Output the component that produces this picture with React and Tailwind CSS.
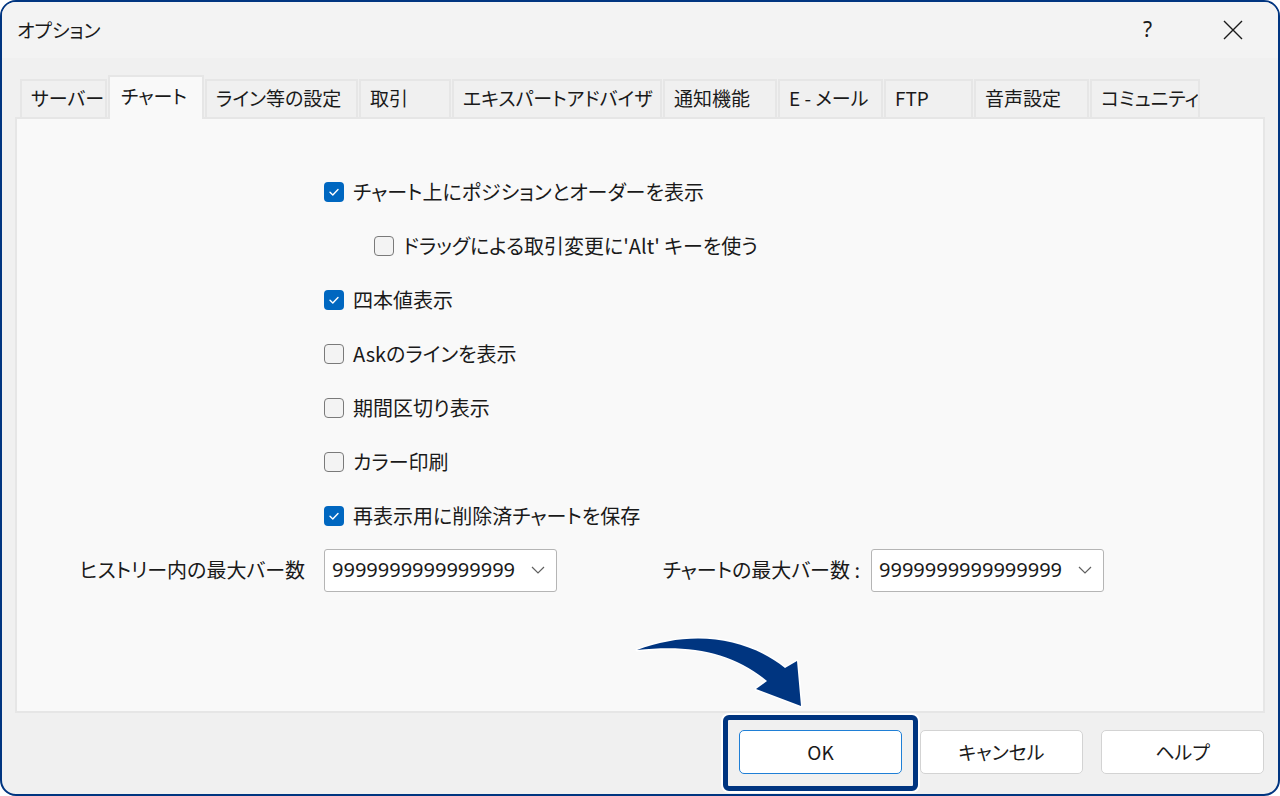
import React from "react";

const tabs = [
  { label: "サーバー", w: "w-[87px]" },
  { label: "チャート", w: "w-[96px]", active: true },
  { label: "ライン等の設定", w: "w-[153px]" },
  { label: "取引", w: "w-[92px]" },
  { label: "エキスパートアドバイザ", w: "w-[210px]" },
  { label: "通知機能", w: "w-[114px]" },
  { label: "E - メール", w: "w-[105px]" },
  { label: "FTP", w: "w-[89px]" },
  { label: "音声設定", w: "w-[115px]" },
  { label: "コミュニティ", w: "w-[110px]" },
];

const options = [
  { label: "チャート上にポジションとオーダーを表示", checked: true },
  { label: "ドラッグによる取引変更に'Alt' キーを使う", checked: false, indent: true },
  { label: "四本値表示", checked: true },
  { label: "Askのラインを表示", checked: false },
  { label: "期間区切り表示", checked: false },
  { label: "カラー印刷", checked: false },
  { label: "再表示用に削除済チャートを保存", checked: true },
];

const Checkbox = ({ checked }) =>
  checked ? (
    <span className="w-[20px] h-[20px] rounded-[4px] bg-[#0067c0] flex items-center justify-center shrink-0">
      <svg width="12" height="10" viewBox="0 0 12 10">
        <path d="M2 5.2 L4.8 8 L10 2.4" fill="none" stroke="#fff" strokeWidth="1.4" strokeLinecap="round" strokeLinejoin="round" />
      </svg>
    </span>
  ) : (
    <span className="w-[20px] h-[20px] rounded-[4px] border-[1.5px] border-[#7a7a7a] bg-[#f3f3f3] shrink-0" />
  );

const Select = ({ value }) => (
  <div className="w-[233px] h-[43px] bg-white border border-[#b5b5b5] rounded-[3px] flex items-center justify-between pl-[7px] pr-[10px]">
    <span className="font-['Noto_Sans',sans-serif] text-[20px] text-[#1a1a1a]">{value}</span>
    <svg width="16" height="10" viewBox="0 0 16 10">
      <path d="M2 2 L8 8 L14 2" fill="none" stroke="#606060" strokeWidth="1.2" />
    </svg>
  </div>
);

const Button = ({ label, primary }) => (
  <div
    className={
      "w-[163px] h-[44px] rounded-[5px] bg-white flex items-center justify-center text-[19px] text-[#1a1a1a] " +
      (primary ? "border-[1.5px] border-[#1f7fd6]" : "border border-[#d3d3d3]")
    }
  >
    {label}
  </div>
);

export default function App() {
  return (
    <div className="relative w-[1280px] h-[796px] bg-white font-['Noto_Sans_CJK_JP',sans-serif] [font-feature-settings:'palt'] text-[#1a1a1a]">
      <div className="w-full h-full border-2 border-[#003580] rounded-[16px] overflow-hidden bg-[#f0f0f0] flex flex-col">
        {/* title bar */}
        <div className="h-[56px] bg-[#f3f3f3] flex items-center justify-between pl-[15px] pr-[35px] shrink-0">
          <span className="text-[19px]">オプション</span>
          <div className="flex items-center gap-[71px]">
            <span className="font-['Noto_Sans',sans-serif] text-[21px]">?</span>
            <svg width="20" height="20" viewBox="0 0 20 20">
              <path d="M1 1 L19 19 M19 1 L1 19" stroke="#1a1a1a" strokeWidth="1.4" />
            </svg>
          </div>
        </div>

        {/* tabs */}
        <div className="px-[13px] pt-[17px]">
          <div className="flex items-end gap-[1px] pl-[5px] h-[42px] relative z-10">
            {tabs.map((t) =>
              t.active ? (
                <div
                  key={t.label}
                  className={t.w + " h-[44px] -mb-[2px] bg-[#f9f9f9] border-2 border-b-0 border-[#e6e6e6] pl-[11px] pt-[4px] text-[19px] leading-[30px] whitespace-nowrap"}
                >
                  {t.label}
                </div>
              ) : (
                <div
                  key={t.label}
                  className={t.w + " h-[38px] bg-[#f0f0f0] border-2 border-b-0 border-[#e6e6e6] pl-[9px] text-[19px] leading-[34px] whitespace-nowrap overflow-hidden"}
                >
                  {t.label}
                </div>
              )
            )}
          </div>

          {/* panel */}
          <div className="h-[596px] bg-[#f9f9f9] border-2 border-[#e6e6e6] pt-[46px]">
            <div className="pl-[307px]">
              {options.map((o) => (
                <div key={o.label} className={"h-[54px] flex items-center gap-[9px] " + (o.indent ? "pl-[50px]" : "")}>
                  <Checkbox checked={o.checked} />
                  <span className="text-[20px]">{o.label}</span>
                </div>
              ))}
            </div>
            <div className="h-[54px] flex items-center">
              <div className="w-[288px] flex justify-end text-[20px]">ヒストリー内の最大バー数</div>
              <div className="ml-[19px]">
                <Select value="9999999999999999" />
              </div>
              <div className="w-[303px] flex justify-end text-[20px]">チャートの最大バー数 :</div>
              <div className="ml-[11px]">
                <Select value="9999999999999999" />
              </div>
            </div>
          </div>
        </div>

        {/* buttons */}
        <div className="flex justify-end gap-[18px] pr-[14px] pt-[17px]">
          <Button label="OK" primary />
          <Button label="キャンセル" />
          <Button label="ヘルプ" />
        </div>
      </div>

      {/* highlight box around OK */}
      <div className="absolute left-[723px] top-[715px] w-[195px] h-[76px] rounded-[6px] border-[5px] border-[#003580] ring-2 ring-white" />

      {/* arrow */}
      <svg className="absolute left-0 top-0 pointer-events-none" width="1280" height="796" viewBox="0 0 1280 796">
        <path
          d="M637 650 C690 630 745 636 785 668 L797 661 L801 706 L756 689 L767 681 C733 652 690 644 637 650 Z"
          fill="#003580"
          stroke="#fff"
          strokeWidth="3"
          strokeLinejoin="round"
          paintOrder="stroke"
        />
      </svg>
    </div>
  );
}
